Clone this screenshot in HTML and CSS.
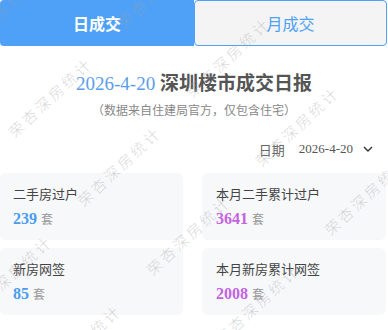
FILE: index.html
```html
<!DOCTYPE html>
<html lang="zh">
<head>
<meta charset="utf-8">
<link rel="stylesheet" href="styles.css">
</head>
<body>
<div class="page">
  <div class="tabs">
    <div class="tab tab-active">日成交</div>
    <div class="tab tab-idle">月成交</div>
  </div>
  <h1 class="title"><span class="title-date">2026-4-20</span> <span class="title-text">深圳楼市成交日报</span></h1>
  <p class="subtitle">（数据来自住建局官方，仅包含住宅）</p>
  <div class="date-row">
    <span class="date-label">日期</span>
    <span class="date-value">2026-4-20</span>
    <svg class="chev" width="10" height="6" viewBox="0 0 10 6"><path d="M1 1 L5 5 L9 1" fill="none" stroke="#333" stroke-width="1.4"/></svg>
  </div>
  <div class="grid">
    <div class="card">
      <div class="label">二手房过户</div>
      <div class="value"><span class="num blue">239</span> <span class="unit">套</span></div>
    </div>
    <div class="card">
      <div class="label">本月二手累计过户</div>
      <div class="value"><span class="num purple">3641</span> <span class="unit">套</span></div>
    </div>
    <div class="card">
      <div class="label">新房网签</div>
      <div class="value"><span class="num blue">85</span> <span class="unit">套</span></div>
    </div>
    <div class="card">
      <div class="label">本月新房累计网签</div>
      <div class="value"><span class="num purple">2008</span> <span class="unit">套</span></div>
    </div>
  </div>
  <div class="wm-layer">
    <span class="wm w1">荣杏深房统计</span>
    <span class="wm w2">荣杏深房统计</span>
    <span class="wm w3">荣杏深房统计</span>
    <span class="wm w4">荣杏深房统计</span>
    <span class="wm w5">荣杏深房统计</span>
    <span class="wm w6">荣杏深房统计</span>
    <span class="wm w7">荣杏深房统计</span>
    <span class="wm w8">荣杏深房统计</span>
    <span class="wm w9">荣杏深房统计</span>
    <span class="wm w10">荣杏深房统计</span>
    <span class="wm w11">荣杏深房统计</span>
  </div>
</div>
</body>
</html>
```

FILE: styles.css
```css
html, body {
  margin: 0;
  padding: 0;
  background: #fff;
}
body {
  font-family: "Liberation Serif", "Noto Sans CJK SC", serif;
  color: #333;
  width: 388px;
  height: 330px;
  overflow: hidden;
}
.page {
  position: relative;
  width: 388px;
  height: 330px;
  overflow: hidden;
}
.tabs {
  display: flex;
  width: 387px;
  height: 46px;
}
.tab {
  box-sizing: border-box;
  display: flex;
  align-items: center;
  justify-content: center;
  font-family: "Noto Sans CJK SC", sans-serif;
  font-size: 16px;
}
.tab-active {
  flex: 0 0 194px;
  background: #4ea1f6;
  color: #fff;
  font-weight: 700;
  border-radius: 4px 0 0 4px;
}
.tab-idle {
  flex: 1;
  background: #f4f4f4;
  color: #4ea1f6;
  border: 1px solid #4ea1f6;
  border-radius: 4px;
}
.title {
  margin: 23px 0 0;
  text-align: center;
  font-size: 19px;
  line-height: 26px;
  font-weight: normal;
}
.title-date {
  color: #5a9de8;
}
.title-text {
  font-family: "Noto Sans CJK SC", sans-serif;
  color: #555;
  font-weight: 700;
}
.subtitle {
  margin: 4px 0 0;
  text-align: center;
  font-family: "Noto Sans CJK SC", sans-serif;
  font-size: 12px;
  line-height: 18px;
  color: #888;
}
.date-row {
  margin-top: 20px;
  display: flex;
  justify-content: flex-end;
  align-items: center;
  padding-right: 15px;
  height: 20px;
  font-size: 13px;
  color: #555;
}
.date-label {
  font-family: "Noto Sans CJK SC", sans-serif;
  color: #666;
}
.date-value {
  margin-left: 14px;
  color: #555;
}
.chev {
  margin-left: 10px;
}
.grid {
  margin-top: 14px;
  display: grid;
  grid-template-columns: 183px 184px;
  column-gap: 19px;
  row-gap: 8px;
}
.card {
  background: #f7f8fa;
  border-radius: 6px;
  padding: 12px 13px 10px;
}
.card:nth-child(2n) {
  padding-left: 14px;
}
.label {
  font-family: "Noto Sans CJK SC", sans-serif;
  font-size: 13px;
  line-height: 18px;
  color: #444;
}
.value {
  margin-top: 5px;
  line-height: 22px;
  height: 22px;
}
.num {
  font-size: 16px;
  font-weight: 700;
}
.blue { color: #4a9cef; }
.purple { color: #c463e0; }
.unit {
  font-family: "Noto Sans CJK SC", sans-serif;
  font-size: 12px;
  color: #999;
}
.wm-layer {
  position: absolute;
  inset: 0;
  pointer-events: none;
}
.wm {
  position: absolute;
  white-space: nowrap;
  font-family: "Noto Sans CJK SC", sans-serif;
  font-size: 15px;
  font-weight: 300;
  letter-spacing: 3px;
  color: rgba(160, 160, 160, 0.42);
  transform: translate(-50%, -50%) rotate(-43deg);
}
.w1 { left: -19px; top: 28px; }
.w2 { left: 50px; top: 97px; }
.w3 { left: 119px; top: 166px; }
.w4 { left: 188px; top: 235px; }
.w5 { left: 257px; top: 304px; }
.w6 { left: 159px; top: -12px; }
.w7 { left: 228px; top: 57px; }
.w8 { left: 297px; top: 126px; }
.w9 { left: 366px; top: 195px; }
.w10 { left: 10px; top: 275px; }
.w11 { left: 79px; top: 344px; }
```
